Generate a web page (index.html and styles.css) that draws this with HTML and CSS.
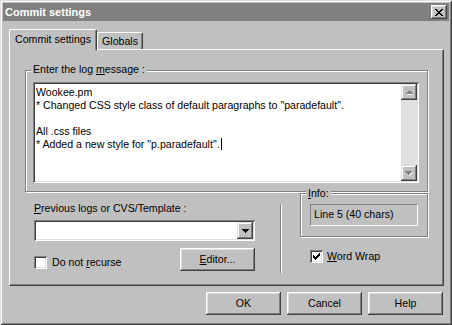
FILE: index.html
```
<!DOCTYPE html>
<html>
<head>
<meta charset="utf-8">
<title>Commit settings</title>
<link rel="stylesheet" href="styles.css">
</head>
<body>
<div class="win">
  <div class="titlebar">
    <span class="title-text">Commit settings</span>
    <span class="close-btn">
      <svg width="8" height="7" viewBox="0 0 8 7" shape-rendering="crispEdges"><path d="M0 0h2v1H0zM6 0h2v1H6zM1 1h2v1H1zM5 1h2v1H5zM2 2h4v1H2zM3 3h2v1H3zM2 4h4v1H2zM1 5h2v1H1zM5 5h2v1H5zM0 6h2v1H0zM6 6h2v1H6z" fill="#000"/></svg>
    </span>
  </div>
  <div class="client">
    <div class="tabs">
      <div class="tab tab-active">Commit settings</div>
      <div class="tab">Globals</div>
    </div>
    <div class="panel">
      <div class="group group-log">
        <span class="group-label">Enter the log <u>m</u>essage :</span>
        <div class="memo">
          <div class="memo-text">
            <div class="line">Wookee.pm</div>
            <div class="line">* Changed CSS style class of default paragraphs to "paradefault".</div>
            <div class="line">&nbsp;</div>
            <div class="line">All .css files</div>
            <div class="line">* Added a new style for "p.paradefault".<span class="caret"></span></div>
          </div>
          <div class="vscroll">
            <div class="sbtn">
              <svg width="7" height="5" viewBox="0 0 7 5" shape-rendering="crispEdges"><path d="M4 1h1v1H4zM5 2h1v1H5zM6 3h1v1H6zM1 4h7v1H1z" fill="#fff"/><path d="M3 0h1v1H3zM2 1h3v1H2zM1 2h5v1H1zM0 3h7v1H0z" fill="#808080"/></svg>
            </div>
            <div class="strack"></div>
            <div class="sbtn">
              <svg width="8" height="5" viewBox="0 0 8 5" shape-rendering="crispEdges"><path d="M7 1h1v1H7zM6 2h1v1H6zM5 3h1v1H5zM4 4h1v1H4z" fill="#fff"/><path d="M0 0h7v1H0zM1 1h5v1H1zM2 2h3v1H2zM3 3h1v1H3z" fill="#808080"/></svg>
            </div>
          </div>
        </div>
      </div>
      <div class="lower">
        <div class="col-left">
          <div class="lbl"><u>P</u>revious logs or CVS/Template :</div>
          <div class="combo">
            <div class="combo-field"></div>
            <div class="combo-btn">
              <svg width="7" height="4" viewBox="0 0 7 4" shape-rendering="crispEdges"><path d="M0 0h7v1H0zM1 1h5v1H1zM2 2h3v1H2zM3 3h1v1H3z" fill="#000"/></svg>
            </div>
          </div>
          <div class="row-left">
            <div class="check-row check-recurse">
              <span class="checkbox"></span>
              <span class="check-label">Do not <u>r</u>ecurse</span>
            </div>
            <div class="btn btn-editor"><span><u>E</u>ditor...</span></div>
          </div>
        </div>
        <div class="sep"></div>
        <div class="col-right">
          <div class="group group-info">
            <span class="group-label info-label"><u>I</u>nfo:</span>
            <div class="static">Line 5 (40 chars)</div>
          </div>
          <div class="check-row check-wrap">
            <span class="checkbox">
              <svg width="7" height="7" viewBox="0 0 7 7" shape-rendering="crispEdges"><path d="M6 0h1v1H6zM5 1h2v1H5zM4 2h3v1H4zM0 2h1v1H0zM0 3h2v1H0zM3 3h3v1H3zM0 4h5v1H0zM1 5h3v1H1zM2 6h1v1H2z" fill="#000"/></svg>
            </span>
            <span class="check-label"><u>W</u>ord Wrap</span>
          </div>
        </div>
      </div>
    </div>
    <div class="buttons">
      <div class="btn"><span>OK</span></div>
      <div class="btn"><span>Cancel</span></div>
      <div class="btn"><span>Help</span></div>
    </div>
  </div>
</div>
</body>
</html>
```
FILE: styles.css
```
* { box-sizing: border-box; }
html, body { margin: 0; padding: 0; background: #c0c0c0; }
body {
  font-family: "Liberation Sans", Arial, sans-serif;
  font-size: 10.6px;
  line-height: 13px;
  color: #000;
}
u { text-decoration: underline; text-underline-offset: 1px; }

.win {
  width: 452px;
  height: 325px;
  padding: 3px;
  background: #c0c0c0;
  box-shadow: inset 1px 1px 0 #dfdfdf, inset -1px -1px 0 #404040,
              inset 2px 2px 0 #fff, inset -2px -2px 0 #808080;
}

.titlebar {
  height: 18px;
  background: #808080;
  display: flex;
  align-items: center;
  justify-content: space-between;
  padding: 0 2px 0 2px;
}
.title-text {
  color: #fff;
  font-weight: bold;
  font-size: 11px;
  line-height: 18px;
}
.close-btn {
  width: 16px;
  height: 14px;
  background: #c0c0c0;
  display: flex;
  align-items: center;
  justify-content: center;
  padding-right: 1px;
  box-shadow: inset -1px -1px 0 #404040, inset 1px 1px 0 #fff,
              inset -2px -2px 0 #808080, inset 2px 2px 0 #dfdfdf;
}
.close-btn svg { display: block; }

.client {
  padding: 0 5px 0 6px;
}

.tabs {
  display: flex;
  align-items: flex-end;
  height: 20px;
  margin-top: 8px;
}
.tab {
  height: 17px;
  width: 46px;
  text-align: center;
  line-height: 14px;
  padding-top: 1px;
  border-top: 1px solid #fff;
  border-left: 1px solid #fff;
  border-right: 1px solid #404040;
  border-top-left-radius: 2px;
  border-top-right-radius: 2px;
  box-shadow: inset -1px 0 0 #808080;
  background: #c0c0c0;
}
.tab-active {
  width: 88px;
  height: 21px;
  margin-bottom: -1px;
  padding-top: 2px;
  position: relative;
  z-index: 1;
}

.panel {
  height: 237px;
  border-top: 1px solid #fff;
  border-left: 1px solid #fff;
  border-right: 1px solid #404040;
  border-bottom: 1px solid #404040;
  box-shadow: inset -1px -1px 0 #808080;
  padding-top: 20px;
}

.group {
  position: relative;
  border: 1px solid #808080;
  box-shadow: inset 1px 1px 0 #fff, 1px 1px 0 #fff;
}
.group-log {
  margin-left: 15px;
  width: 403px;
  height: 122px;
  padding: 11px 0 0 7px;
}
.group-label {
  position: absolute;
  top: -8px;
  left: 5px;
  padding: 0 2px;
  background: #c0c0c0;
  line-height: 13px;
  white-space: nowrap;
}

.memo {
  width: 386px;
  height: 101px;
  display: flex;
  padding: 2px;
  background: #fff;
  box-shadow: inset 1px 1px 0 #808080, inset -1px -1px 0 #fff,
              inset 2px 2px 0 #404040, inset -2px -2px 0 #dfdfdf;
}
.memo-text {
  flex: 1;
  padding: 2px 0 0 1px;
  white-space: nowrap;
  overflow: hidden;
}
.line { height: 13px; }
.caret {
  display: inline-block;
  width: 1px;
  height: 12px;
  background: #000;
  vertical-align: -2px;
  margin-left: 1px;
}
.vscroll {
  width: 16px;
  display: flex;
  flex-direction: column;
}
.sbtn {
  height: 16px;
  flex: none;
  background: #c0c0c0;
  display: flex;
  align-items: center;
  justify-content: center;
  box-shadow: inset -1px -1px 0 #404040, inset 1px 1px 0 #dfdfdf,
              inset -2px -2px 0 #808080, inset 2px 2px 0 #fff;
}
.sbtn svg { display: block; }
.strack {
  flex: 1;
  background: #e0e0e0;
}

.lower {
  display: flex;
  margin-top: 1px;
  padding-left: 24px;
}
.col-left {
  width: 221px;
  padding-top: 9px;
}
.lbl { height: 13px; white-space: nowrap; }
.combo {
  margin-top: 5px;
  height: 21px;
  display: flex;
  padding: 2px;
  background: #fff;
  box-shadow: inset 1px 1px 0 #808080, inset -1px -1px 0 #fff,
              inset 2px 2px 0 #404040, inset -2px -2px 0 #dfdfdf;
}
.combo-field { flex: 1; }
.combo-btn {
  width: 16px;
  height: 17px;
  background: #c0c0c0;
  display: flex;
  align-items: center;
  justify-content: center;
  box-shadow: inset -1px -1px 0 #404040, inset 1px 1px 0 #dfdfdf,
              inset -2px -2px 0 #808080, inset 2px 2px 0 #fff;
}
.combo-btn svg { display: block; }
.row-left {
  display: flex;
  justify-content: space-between;
  margin-top: 7px;
}
.check-row {
  display: flex;
  align-items: center;
  white-space: nowrap;
}
.check-recurse { margin-top: 8px; align-self: flex-start; }
.checkbox {
  width: 13px;
  height: 13px;
  background: #fff;
  display: flex;
  align-items: center;
  justify-content: center;
  box-shadow: inset 1px 1px 0 #808080, inset -1px -1px 0 #fff,
              inset 2px 2px 0 #404040, inset -2px -2px 0 #dfdfdf;
}
.checkbox svg { display: block; }
.check-recurse .check-label { margin-left: 5px; }
.check-wrap .check-label { margin-left: 4px; }

.btn {
  width: 75px;
  height: 23px;
  display: flex;
  align-items: center;
  justify-content: center;
  background: #c0c0c0;
  box-shadow: inset -1px -1px 0 #404040, inset 1px 1px 0 #fff,
              inset -2px -2px 0 #808080, inset 2px 2px 0 #dfdfdf;
}
.btn span { line-height: 13px; }

.sep {
  width: 2px;
  height: 69px;
  margin: 11px 0 0 25px;
  border-left: 1px solid #808080;
  border-right: 1px solid #fff;
}
.col-right {
  margin-left: 18px;
  width: 128px;
}
.group-info {
  height: 44px;
  padding: 10px 0 0 9px;
}
.info-label { top: -7px; left: 5px; }
.static {
  width: 108px;
  height: 22px;
  padding: 3px 0 0 3px;
  border-top: 1px solid #808080;
  border-left: 1px solid #808080;
  border-right: 1px solid #fff;
  border-bottom: 1px solid #fff;
  white-space: nowrap;
}
.check-wrap {
  margin: 13px 0 0 10px;
}

.buttons {
  display: flex;
  justify-content: flex-end;
  gap: 6px;
  margin-top: 6px;
  padding-right: 1px;
}
```
